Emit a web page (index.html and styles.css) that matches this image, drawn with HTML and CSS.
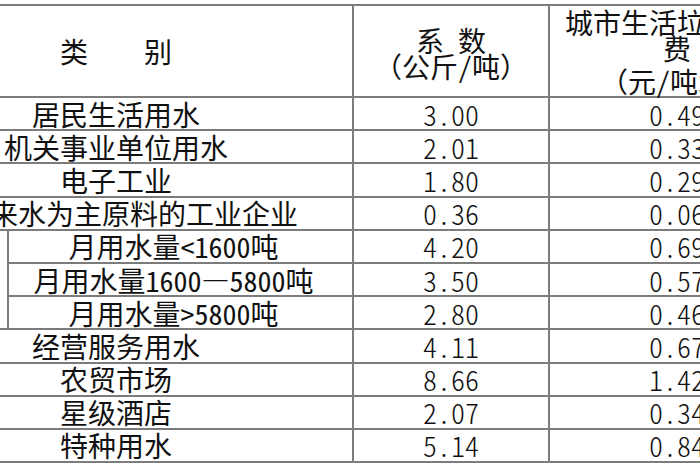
FILE: index.html
```html
<!DOCTYPE html>
<html lang="zh-CN">
<head>
<meta charset="utf-8">
<title>垃圾处理费系数表</title>
<link rel="stylesheet" href="styles.css">
</head>
<body>
<table class="fee">
  <colgroup>
    <col class="c-a">
    <col class="c-b">
    <col class="c-num">
    <col class="c-fee">
  </colgroup>
  <tr class="head">
    <td colspan="2" class="cat">类　　别</td>
    <td class="hd2"><div class="l">系<span class="half"> </span>数</div><div class="l">（公斤<span class="half">/</span>吨）</div></td>
    <td class="hd3"><div class="l">城市生活垃圾处理</div><div class="l">费</div><div class="l l3">（元<span class="half">/</span>吨水）</div></td>
  </tr>
  <tr><td colspan="2" class="cat">居民生活用水</td><td class="num">3.00</td><td class="num">0.49</td></tr>
  <tr><td colspan="2" class="cat">机关事业单位用水</td><td class="num">2.01</td><td class="num">0.33</td></tr>
  <tr><td colspan="2" class="cat">电子工业</td><td class="num">1.80</td><td class="num">0.29</td></tr>
  <tr><td colspan="2" class="cat">以自来水为主原料的工业企业</td><td class="num">0.36</td><td class="num">0.06</td></tr>
  <tr><td rowspan="3" class="grp"></td><td class="sub">月用水量<span class="half">&lt;1600</span>吨</td><td class="num">4.20</td><td class="num">0.69</td></tr>
  <tr><td class="sub">月用水量<span class="half">1600</span>—<span class="half">5800</span>吨</td><td class="num">3.50</td><td class="num">0.57</td></tr>
  <tr><td class="sub">月用水量<span class="half">&gt;5800</span>吨</td><td class="num">2.80</td><td class="num">0.46</td></tr>
  <tr><td colspan="2" class="cat">经营服务用水</td><td class="num">4.11</td><td class="num">0.67</td></tr>
  <tr><td colspan="2" class="cat">农贸市场</td><td class="num">8.66</td><td class="num">1.42</td></tr>
  <tr><td colspan="2" class="cat">星级酒店</td><td class="num">2.07</td><td class="num">0.34</td></tr>
  <tr><td colspan="2" class="cat">特种用水</td><td class="num">5.14</td><td class="num">0.84</td></tr>
</table>
</body>
</html>
```
FILE: styles.css
```css
html, body {
  margin: 0;
  padding: 0;
  background: #ffffff;
  overflow: hidden;
}
body {
  width: 700px;
  height: 470px;
  font-family: "Noto Sans CJK SC", "Noto Sans CJK JP", sans-serif;
  font-size: 28px;
  color: #111111;
}
.fee {
  border-collapse: collapse;
  table-layout: fixed;
  width: 926px;
  margin: 4px 0 0 -122px;
}
.c-a { width: 129px; }
.c-b { width: 345px; }
.c-num { width: 196px; }
.c-fee { width: 256px; }
.fee td {
  border: 2px solid #7c7c7c;
  padding: 0;
  text-align: center;
  vertical-align: middle;
  white-space: nowrap;
  line-height: 28px;
}
.fee tr { height: 33.2px; }
.fee tr.head { height: 92px; }
.half {
  font-feature-settings: "hwid" 1;
}
.num {
  font-weight: 300;
  font-feature-settings: "hwid" 1;
}
.sub { padding-right: 14px !important; }
.hd2 .l, .hd3 .l { line-height: 26px; }
.hd2 .l:first-child { padding-top: 4px; }
.hd3 .l3 { margin-top: 7px; }
```
